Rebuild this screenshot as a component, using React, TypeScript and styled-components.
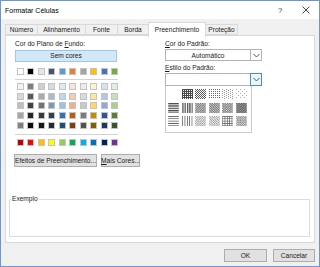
import React from "react";
import styled, { createGlobalStyle } from "styled-components";

const themeColors = [
  "#FFFFFF", "#000000", "#E7E6E6", "#44546A", "#5B9BD5",
  "#ED7D31", "#A5A5A5", "#FFC000", "#4472C4", "#70AD47",
];

const tintRows = [
  ["#F2F2F2", "#7F7F7F", "#D0CECE", "#D6DCE4", "#DDEBF7", "#FCE4D6", "#EDEDED", "#FFF2CC", "#D9E1F2", "#E2EFDA"],
  ["#D9D9D9", "#595959", "#AEAAAA", "#ACB9CA", "#BDD7EE", "#F8CBAD", "#DBDBDB", "#FFE699", "#B4C6E7", "#C6E0B4"],
  ["#BFBFBF", "#404040", "#757171", "#8497B0", "#9BC2E6", "#F4B084", "#C9C9C9", "#FFD966", "#8EA9DB", "#A9D08E"],
  ["#A6A6A6", "#262626", "#3A3838", "#333F4F", "#2F75B5", "#C65911", "#7B7B7B", "#BF8F00", "#305496", "#548235"],
  ["#808080", "#0D0D0D", "#161616", "#222B35", "#1F4E78", "#833C0C", "#525252", "#806000", "#203764", "#375623"],
];

const standardColors = [
  "#C00000", "#FF0000", "#FFC000", "#FFFF00", "#92D050",
  "#00B050", "#00B0F0", "#0070C0", "#002060", "#7030A0",
];

// pattern tiles: size + test for a dark pixel. native = drawn 1:1, others shrunk like the scaled dialog
type PatternDef = {
  id: string;
  w: number;
  h: number;
  on: (x: number, y: number) => boolean;
  native?: boolean;
  ink?: string;
};

const mod = (n: number, m: number) => ((n % m) + m) % m;

const patterns: PatternDef[] = [
  { id: "none", w: 1, h: 1, on: () => false },
  { id: "g75", w: 2, h: 2, on: (x, y) => !(x === 1 && y === 1), native: true, ink: "#4a4a4a" },
  { id: "g50", w: 2, h: 2, on: (x, y) => (x + y) % 2 === 0, native: true, ink: "#5a5a5a" },
  { id: "g25", w: 2, h: 2, on: (x, y) => x === 0 && y === 0, native: true, ink: "#6a6a6a" },
  { id: "g125", w: 4, h: 2, on: (x, y) => (x === 0 && y === 0) || (x === 2 && y === 1), native: true, ink: "#9a9a9a" },
  { id: "g0625", w: 4, h: 4, on: (x, y) => (x === 0 && y === 0) || (x === 2 && y === 2), native: true, ink: "#aaaaaa" },
  { id: "hs", w: 1, h: 4, on: (_x, y) => y < 2 },
  { id: "vs", w: 4, h: 1, on: (x) => x < 2 },
  { id: "rd", w: 4, h: 4, on: (x, y) => mod(x + y, 4) < 2 },
  { id: "dd", w: 4, h: 4, on: (x, y) => mod(x - y, 4) < 2 },
  { id: "dc", w: 4, h: 4, on: (x, y) => (x < 2) === (y < 2) },
  { id: "tdc", w: 4, h: 4, on: (x, y) => mod(x + y, 4) !== 3 },
  { id: "ths", w: 1, h: 4, on: (_x, y) => y === 0 },
  { id: "tvs", w: 4, h: 1, on: (x) => x === 0 },
  { id: "trd", w: 4, h: 4, on: (x, y) => mod(x + y, 4) === 0 },
  { id: "tdd", w: 4, h: 4, on: (x, y) => mod(x - y, 4) === 0 },
  { id: "thc", w: 4, h: 4, on: (x, y) => x === 0 || y === 0 },
  { id: "tdx", w: 4, h: 4, on: (x, y) => mod(x + y, 4) === 0 || mod(x - y, 4) === 0 },
];

const PatternCell: React.FC<{ def: PatternDef }> = ({ def }) => {
  const pixels: React.ReactNode[] = [];
  for (let y = 0; y < def.h; y++) {
    for (let x = 0; x < def.w; x++) {
      if (def.on(x, y))
        pixels.push(<rect key={`${x}-${y}`} x={x} y={y} width={1} height={1} fill={def.ink ?? "#1e1e1e"} />);
    }
  }
  const vw = def.native ? 11 : 18;
  const vh = def.native ? 10 : 17;
  return (
    <svg
      width="11"
      height="10"
      viewBox={`0 0 ${vw} ${vh}`}
      shapeRendering={def.native ? "crispEdges" : "auto"}
    >
      <defs>
        <pattern id={`pat-${def.id}`} width={def.w} height={def.h} patternUnits="userSpaceOnUse">
          <rect width={def.w} height={def.h} fill="#fff" />
          {pixels}
        </pattern>
      </defs>
      <rect width={vw} height={vh} fill={`url(#pat-${def.id})`} />
    </svg>
  );
};

const Chevron = () => (
  <svg width="7" height="5" viewBox="0 0 7 5">
    <polyline points="0.5,1 3.5,4 6.5,1" fill="none" stroke="#555" strokeWidth="1" />
  </svg>
);

const CloseIcon = () => (
  <svg width="8" height="8" viewBox="0 0 8 8">
    <path d="M0.5 0.5 L7.5 7.5 M7.5 0.5 L0.5 7.5" stroke="#333" strokeWidth="0.9" />
  </svg>
);

const tabs: [string, number][] = [
  ["Número", 33],
  ["Alinhamento", 49],
  ["Fonte", 33],
  ["Borda", 32],
  ["Preenchimento", 58],
  ["Proteção", 33],
];

export const App: React.FC = () => {
  return (
    <>
      <GlobalStyle />
      <DialogWrapper>
        <TitleBar>
          <TitleText>Formatar Células</TitleText>
          <TitleButton>?</TitleButton>
          <TitleButton>
            <CloseIcon />
          </TitleButton>
        </TitleBar>
        <DialogBody>
          <TabStrip>
            {tabs.map(([t, w]) => (
              <Tab key={t} $width={w} $active={t === "Preenchimento"}>
                {t}
              </Tab>
            ))}
          </TabStrip>
          <TabPanel>
            <Columns>
              <LeftColumn>
                <Label>
                  Cor do Plano de <u>F</u>undo:
                </Label>
                <NoColorButton>Sem cores</NoColorButton>
                <SwatchRow $top={6}>
                  {themeColors.map((c, i) => (
                    <Swatch key={i} $color={c} />
                  ))}
                </SwatchRow>
                <Separator $top={4} />
                <TintGrid>
                  {tintRows.flat().map((c, i) => (
                    <Swatch key={i} $color={c} />
                  ))}
                </TintGrid>
                <Separator $top={5} />
                <SwatchRow $top={4.5}>
                  {standardColors.map((c, i) => (
                    <Swatch key={i} $color={c} />
                  ))}
                </SwatchRow>
                <ButtonRow>
                  <PushButton $width={95}>Efeitos de Preenchimento...</PushButton>
                  <PushButton $width={39}>
                    <u>M</u>ais Cores...
                  </PushButton>
                </ButtonRow>
              </LeftColumn>
              <RightColumn>
                <Label>
                  <u>C</u>or do Padrão:
                </Label>
                <Combo $top={1} $height={12}>
                  <ComboField>Automático</ComboField>
                  <ComboArrow>
                    <Chevron />
                  </ComboArrow>
                </Combo>
                <Label $top={2}>
                  <u>E</u>stilo do Padrão:
                </Label>
                <Combo $top={1} $height={13}>
                  <ComboField />
                  <ComboArrow $focused>
                    <Chevron />
                  </ComboArrow>
                </Combo>
                <PatternList>
                  {patterns.map((p) =>
                    p.id === "none" ? <EmptyCell key={p.id} /> : <PatternCell key={p.id} def={p} />
                  )}
                </PatternList>
              </RightColumn>
            </Columns>
            <SampleBox>
              <SampleLegend>Exemplo</SampleLegend>
            </SampleBox>
          </TabPanel>
          <Footer>
            <PushButton $width={43} $height={13}>OK</PushButton>
            <PushButton $width={42} $height={13}>Cancelar</PushButton>
          </Footer>
        </DialogBody>
      </DialogWrapper>
    </>
  );
};

export default App;

const GlobalStyle = createGlobalStyle`
  html, body {
    margin: 0;
    padding: 0;
    background: #f0f0f0;
  }
  body {
    font-family: "Liberation Sans", Arial, sans-serif;
    font-size: 6.6px;
    color: #1a1a1a;
  }
  u {
    text-underline-offset: 1px;
  }
`;

const DialogWrapper = styled.div`
  width: 320px;
  height: 267px;
  box-sizing: border-box;
  border: 1px solid #6b95d3;
  display: flex;
  flex-direction: column;
  background: #f0f0f0;
`;

const TitleBar = styled.div`
  height: 18px;
  display: flex;
  align-items: center;
  background: #ffffff;
`;

const TitleText = styled.div`
  flex: 1;
  padding-left: 4px;
  font-size: 7px;
  color: #000;
`;

const TitleButton = styled.div`
  width: 26px;
  height: 18px;
  display: flex;
  align-items: center;
  justify-content: center;
  font-size: 7.5px;
  color: #333;
`;

const DialogBody = styled.div`
  flex: 1;
  display: flex;
  flex-direction: column;
  padding: 3px 4px 0 4px;
`;

const TabStrip = styled.div`
  display: flex;
  align-items: flex-end;
  height: 13px;
  position: relative;
  z-index: 1;
`;

const Tab = styled.div<{ $active?: boolean; $width: number }>`
  box-sizing: border-box;
  width: ${(p) => p.$width}px;
  height: ${(p) => (p.$active ? 15 : 11)}px;
  line-height: ${(p) => (p.$active ? 13 : 10)}px;
  margin-bottom: ${(p) => (p.$active ? -2 : 0)}px;
  margin-right: -1px;
  text-align: center;
  border: 1px solid #d9d9d9;
  border-bottom: ${(p) => (p.$active ? "none" : "1px solid #d9d9d9")};
  background: ${(p) => (p.$active ? "#ffffff" : "#f0f0f0")};
  white-space: nowrap;
`;

const TabPanel = styled.div`
  height: 208px;
  box-sizing: border-box;
  border: 1px solid #d9d9d9;
  background: #ffffff;
  display: flex;
  flex-direction: column;
`;

const Columns = styled.div`
  display: grid;
  grid-template-columns: 104px 1fr;
  column-gap: 46px;
  padding-left: 9px;
`;

const LeftColumn = styled.div`
  display: flex;
  flex-direction: column;
`;

const RightColumn = styled.div`
  display: flex;
  flex-direction: column;
`;

const Label = styled.div<{ $top?: number }>`
  margin-top: ${(p) => p.$top ?? 3}px;
  height: 9px;
  line-height: 9px;
  white-space: nowrap;
`;

const NoColorButton = styled.div`
  margin-top: 2px;
  width: 102px;
  height: 12px;
  box-sizing: border-box;
  border: 1px solid #9cc8ee;
  background: #d3e7f8;
  text-align: center;
  line-height: 10px;
`;

const SwatchRow = styled.div<{ $top: number }>`
  margin-top: ${(p) => p.$top}px;
  padding-left: 2px;
  display: grid;
  grid-template-columns: repeat(10, 7px);
  column-gap: 3.45px;
`;

const TintGrid = styled.div`
  margin-top: 3px;
  padding-left: 2px;
  display: grid;
  grid-template-columns: repeat(10, 7px);
  column-gap: 3.45px;
  row-gap: 2.7px;
`;

const Swatch = styled.div<{ $color: string }>`
  width: 7px;
  height: 7px;
  box-sizing: border-box;
  border: 1px solid #c4c4c4;
  background: ${(p) => p.$color};
`;

const Separator = styled.div<{ $top: number }>`
  margin-top: ${(p) => p.$top}px;
  width: 103px;
  height: 1px;
  background: #d2d2d2;
`;

const ButtonRow = styled.div`
  margin-top: 7.7px;
  display: flex;
  gap: 4px;
  margin-left: -1px;
`;

const PushButton = styled.div<{ $width: number; $height?: number }>`
  width: ${(p) => p.$width}px;
  height: ${(p) => p.$height ?? 13}px;
  box-sizing: border-box;
  border: 1px solid #adadad;
  background: #e1e1e1;
  display: flex;
  align-items: center;
  justify-content: center;
  white-space: nowrap;
`;

const Combo = styled.div<{ $top: number; $height: number }>`
  margin-top: ${(p) => p.$top}px;
  width: 97px;
  height: ${(p) => p.$height}px;
  display: flex;
`;

const ComboField = styled.div`
  flex: 1;
  box-sizing: border-box;
  border: 1px solid #b4b4b4;
  border-right: none;
  background: #ffffff;
  display: flex;
  align-items: center;
  justify-content: center;
`;

const ComboArrow = styled.div<{ $focused?: boolean }>`
  width: 12px;
  box-sizing: border-box;
  border: 1px solid ${(p) => (p.$focused ? "#3d8ee0" : "#b4b4b4")};
  background: ${(p) => (p.$focused ? "#eef6fd" : "#ffffff")};
  display: flex;
  align-items: center;
  justify-content: center;
`;

const PatternList = styled.div`
  width: 87px;
  height: 47px;
  box-sizing: border-box;
  border: 1px solid #c9c9c9;
  border-top: none;
  padding: 3px 0 0 2px;
  display: grid;
  grid-template-columns: repeat(6, 11px);
  grid-auto-rows: 10px;
  column-gap: 2.6px;
  row-gap: 3.5px;
  background: #ffffff;
`;

const EmptyCell = styled.div`
  width: 11px;
  height: 10px;
`;

const SampleBox = styled.fieldset`
  margin: auto 4px 5px 3px;
  padding: 0;
  height: 42px;
  box-sizing: border-box;
  border: 1px solid #dcdcdc;
  min-inline-size: 0;
`;

const SampleLegend = styled.legend`
  margin-left: 1px;
  padding: 0 1px;
  line-height: 8px;
  font-size: 6.6px;
`;

const Footer = styled.div`
  display: flex;
  justify-content: flex-end;
  gap: 6px;
  padding-top: 6px;
`;
